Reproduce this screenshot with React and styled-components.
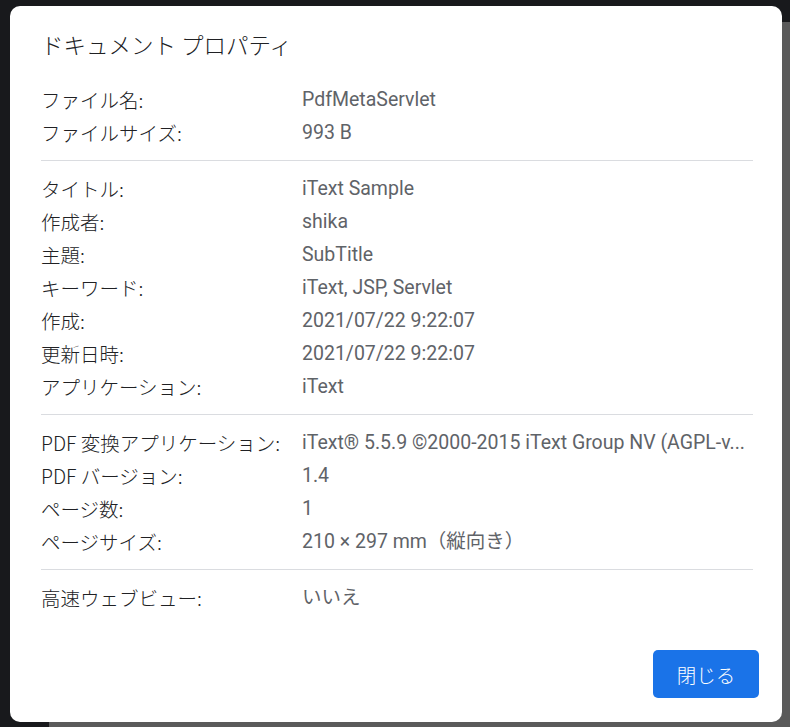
import styled, { createGlobalStyle } from "styled-components";

const GlobalStyle = createGlobalStyle`
  html, body {
    margin: 0;
    padding: 0;
    background: #18191c;
    overflow: hidden;
  }
`;

const Screen = styled.div`
  position: relative;
  width: 790px;
  height: 727px;
  background: #18191c;
  padding: 22px 0 0 49px;
  box-sizing: border-box;
`;

const Viewer = styled.div`
  width: 100%;
  height: 100%;
  background: #5a5a5a;
`;

const Dialog = styled.div`
  position: absolute;
  left: 10px;
  top: 6px;
  width: 772px;
  height: 716px;
  box-sizing: border-box;
  background: #fff;
  border-radius: 10px;
  padding: 20px 29px 24px 31px;
  display: flex;
  flex-direction: column;
  font-family: "Noto Sans CJK JP", "Noto Sans", sans-serif;
  color: #202124;
`;

const Title = styled.h2`
  margin: 0 0 10px;
  font-size: 22.5px;
  font-weight: 300;
  line-height: 36px;
  color: #202124;
`;

const Section = styled.div`
  padding: 11px 0;
  border-bottom: ${(p) => (p.$last ? "none" : "1px solid #dadce0")};
`;

const Row = styled.div`
  display: grid;
  grid-template-columns: 261px 1fr;
  height: 33px;
  align-items: center;
`;

const Label = styled.span`
  font-size: 19.5px;
  font-weight: 300;
  line-height: 33px;
  color: #202124;
  white-space: nowrap;
`;

const Value = styled.span`
  font-family: Roboto, "Noto Sans CJK JP", sans-serif;
  font-size: 19.5px;
  line-height: 33px;
  color: #5f6368;
  white-space: nowrap;
  overflow: hidden;
  text-overflow: ellipsis;
`;

const Footer = styled.div`
  margin-top: auto;
  display: flex;
  justify-content: flex-end;
  margin-right: -6px;
`;

const Button = styled.button`
  width: 106px;
  height: 48px;
  border: none;
  border-radius: 5px;
  background: #1a73e8;
  color: #fff;
  font-family: "Noto Sans CJK JP", sans-serif;
  font-size: 19.5px;
  font-weight: 300;
  cursor: pointer;
`;

const sections = [
  [
    ["ファイル名:", "PdfMetaServlet"],
    ["ファイルサイズ:", "993 B"],
  ],
  [
    ["タイトル:", "iText Sample"],
    ["作成者:", "shika"],
    ["主題:", "SubTitle"],
    ["キーワード:", "iText, JSP, Servlet"],
    ["作成:", "2021/07/22 9:22:07"],
    ["更新日時:", "2021/07/22 9:22:07"],
    ["アプリケーション:", "iText"],
  ],
  [
    ["PDF 変換アプリケーション:", "iText® 5.5.9 ©2000-2015 iText Group NV (AGPL-v..."],
    ["PDF バージョン:", "1.4"],
    ["ページ数:", "1"],
    ["ページサイズ:", "210 × 297 mm（縦向き）"],
  ],
  [["高速ウェブビュー:", "いいえ"]],
];

export default function App() {
  return (
    <>
      <GlobalStyle />
      <Screen>
        <Viewer />
        <Dialog>
          <Title>ドキュメント プロパティ</Title>
          {sections.map((rows, i) => (
            <Section key={i} $last={i === sections.length - 1}>
              {rows.map(([label, value]) => (
                <Row key={label}>
                  <Label>{label}</Label>
                  <Value>{value}</Value>
                </Row>
              ))}
            </Section>
          ))}
          <Footer>
            <Button>閉じる</Button>
          </Footer>
        </Dialog>
      </Screen>
    </>
  );
}
